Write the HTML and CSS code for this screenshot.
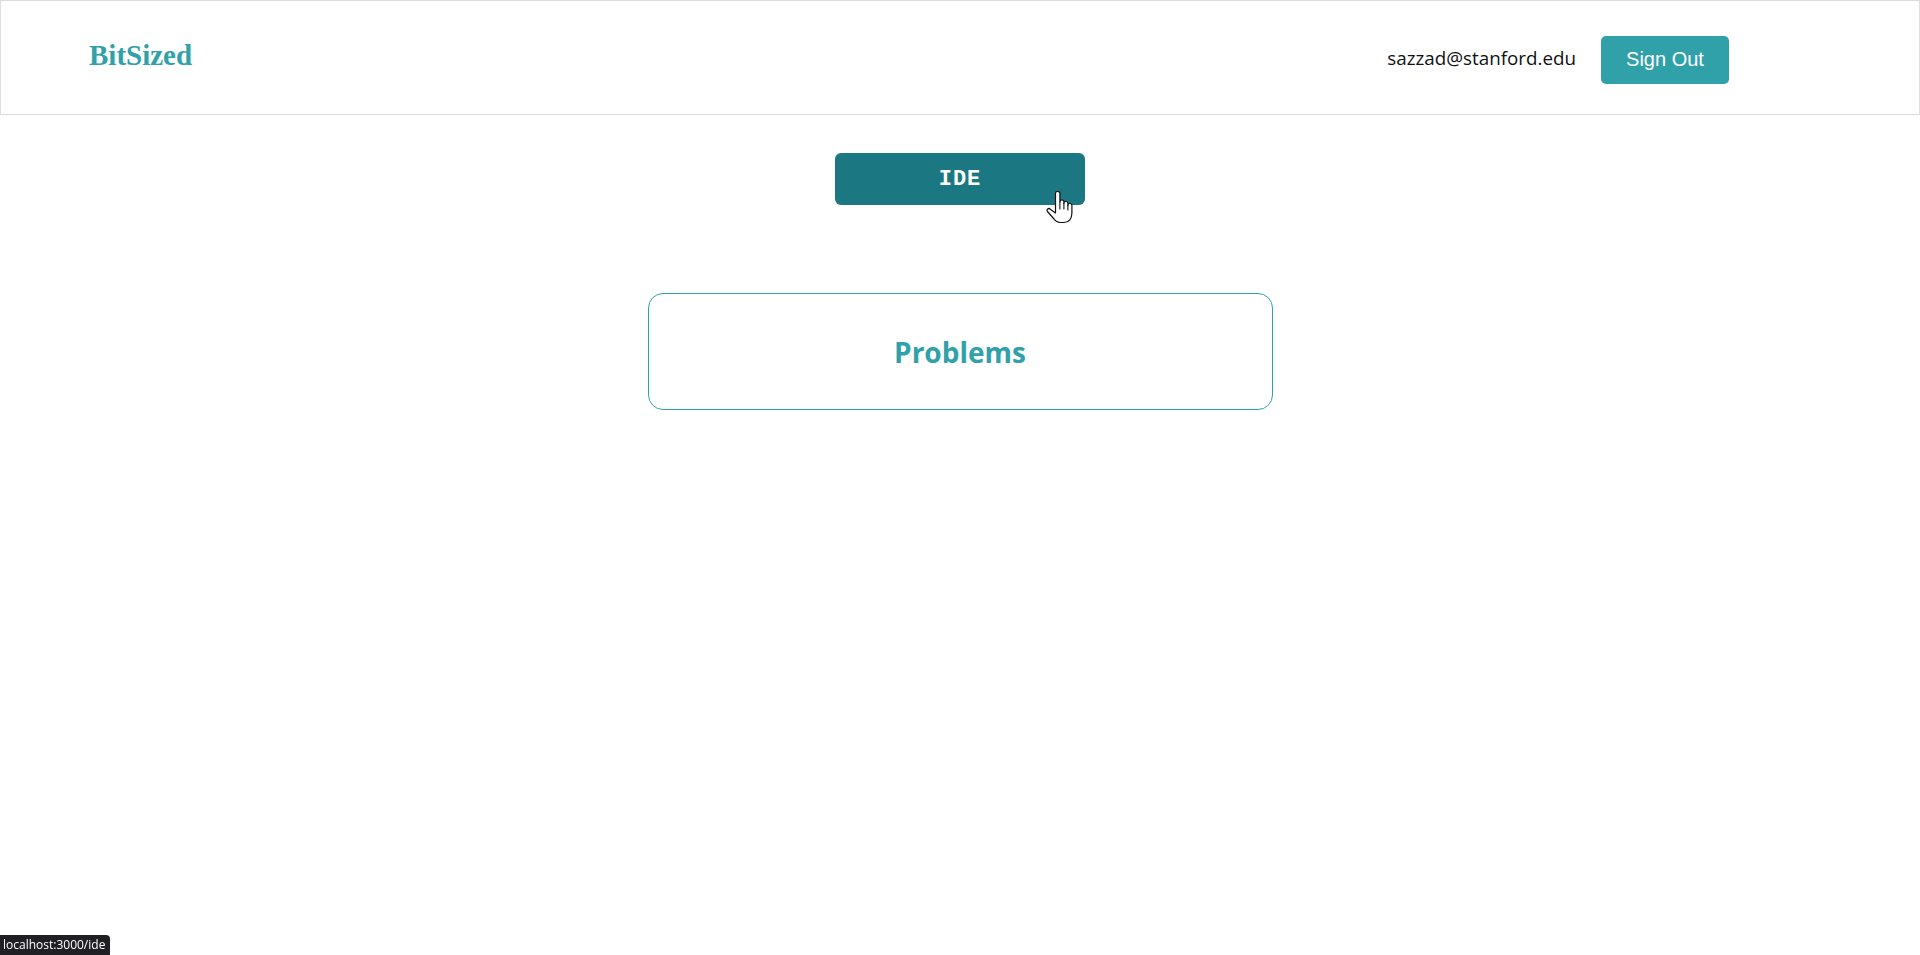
FILE: index.html
```html
<!DOCTYPE html>
<html>
<head>
<meta charset="utf-8">
<title>BitSized</title>
<link rel="stylesheet" href="styles.css">
</head>
<body>
<header class="topbar">
  <div class="brand">BitSized</div>
  <div class="account">
    <span class="email">sazzad@stanford.edu</span>
    <button class="signout">Sign Out</button>
  </div>
</header>
<main class="main">
  <div class="ide-wrap">
    <button class="ide-btn">IDE</button>
    <svg class="cursor" width="28" height="33" viewBox="0 0 28 33" xmlns="http://www.w3.org/2000/svg">
      <path d="M9.5 2.5a2.2 2.2 0 0 1 4.4 0V11a2 2 0 0 1 4 0v1.5a2 2 0 0 1 4 0v2a2 2 0 0 1 4 0V22C25.9 27.5 23 31.5 18 31.5H14C11 31.5 9.5 30 8 28L1.5 20.5a1.8 1.8 0 0 1 2.8-2.3L9.5 22Z" fill="#fff" stroke="#111" stroke-width="1.2" stroke-linejoin="round"/>
      <path d="M13.9 11v7M17.9 12.5v5.5M21.9 14.5v4.5" stroke="#111" stroke-width="1.1" fill="none" stroke-linecap="round"/>
    </svg>
  </div>
  <section class="card">
    <h2 class="card-title">Problems</h2>
  </section>
</main>
<div class="status">localhost:3000/ide</div>
</body>
</html>
```

FILE: styles.css
```css
html, body {
  margin: 0;
  padding: 0;
  background: #ffffff;
}
body {
  font-family: "Open Sans", "Noto Sans", sans-serif;
  color: #111;
  height: 955px;
  overflow: hidden;
}
.topbar {
  box-sizing: border-box;
  height: 115px;
  border: 1px solid #dcdcdc;
  display: flex;
  align-items: center;
  justify-content: space-between;
  padding: 0 190px 0 88px;
}
.brand {
  font-family: "Liberation Serif", serif;
  font-weight: bold;
  font-size: 29px;
  color: #31a1a9;
  margin-top: -4px;
}
.account {
  display: flex;
  align-items: center;
  gap: 25px;
  margin-top: 4px;
}
.email {
  font-family: "Open Sans", sans-serif;
  font-size: 18.8px;
  color: #111;
  margin-top: -3px;
}
.signout {
  width: 128px;
  height: 48px;
  border: none;
  border-radius: 5px;
  background: #31a1a9;
  color: #fff;
  font-family: "Liberation Sans", Arial, sans-serif;
  font-size: 20px;
  padding: 0;
}
.main {
  display: flex;
  flex-direction: column;
  align-items: center;
}
.ide-wrap {
  position: relative;
  margin-top: 38px;
}
.ide-btn {
  display: block;
  width: 250px;
  height: 52px;
  border: none;
  border-radius: 6px;
  background: #1b7883;
  color: #fff;
  font-family: "Liberation Mono", "Courier New", monospace;
  font-weight: bold;
  font-size: 22px;
  letter-spacing: 1px;
  padding: 0;
}
.cursor {
  position: absolute;
  left: 211px;
  top: 38px;
}
.card {
  box-sizing: border-box;
  width: 625px;
  height: 117px;
  margin-top: 88px;
  border: 1px solid #31a1a9;
  border-radius: 15px;
  display: flex;
  align-items: center;
  justify-content: center;
}
.card-title {
  margin: 0;
  font-family: "Open Sans", sans-serif;
  font-weight: bold;
  font-size: 28px;
  color: #31a1a9;
}
.status {
  position: fixed;
  left: 0;
  bottom: 0;
  background: #1f1f24;
  color: #fff;
  font-family: "Open Sans", sans-serif;
  font-size: 12px;
  line-height: 20px;
  padding: 0 5px 0 3px;
  border-top-right-radius: 4px;
}
```
